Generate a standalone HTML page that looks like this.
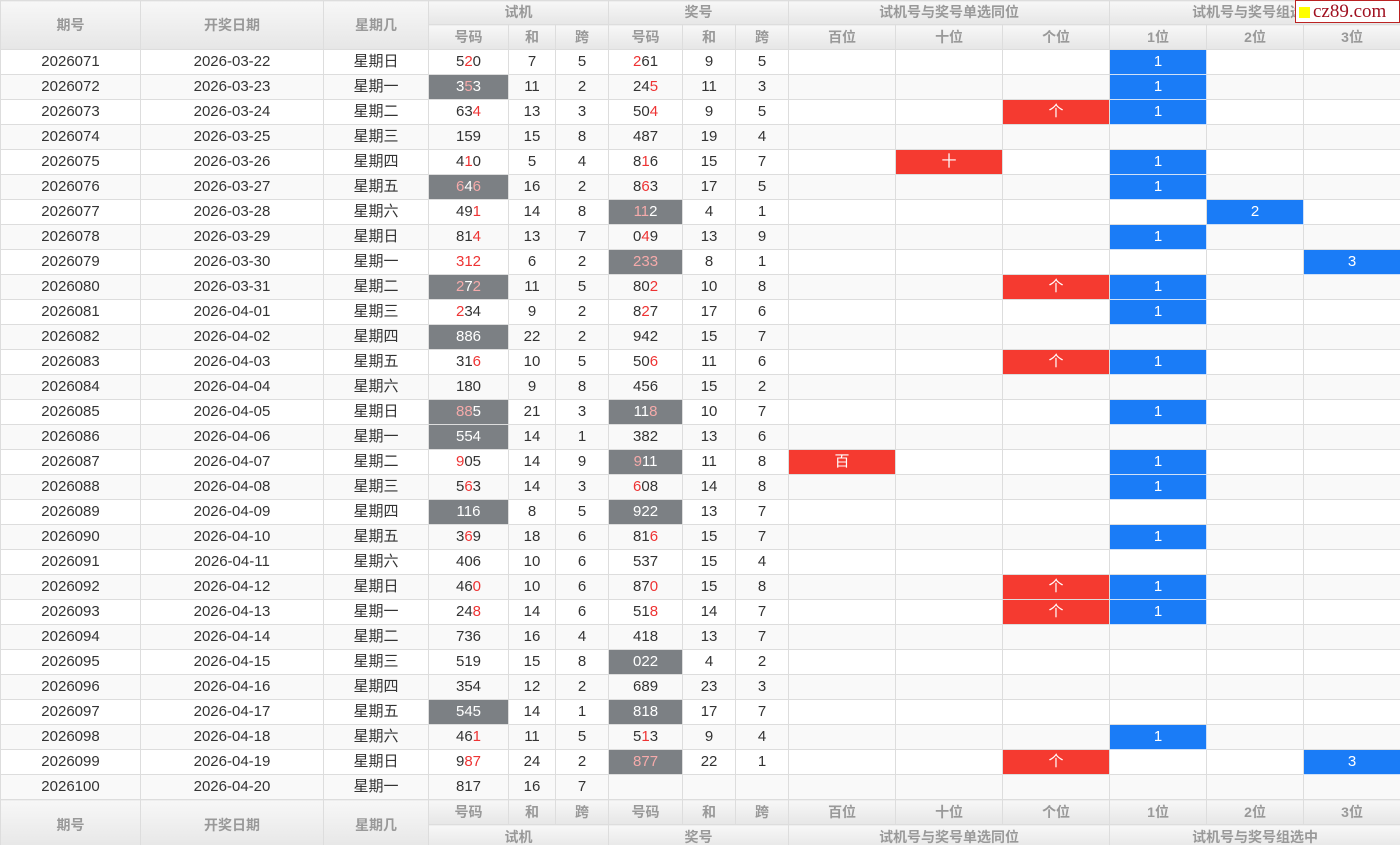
<!DOCTYPE html>
<html><head><meta charset="utf-8">
<style>
html,body{margin:0;padding:0;background:#fff;width:1400px;height:845px;overflow:hidden}
table{border-collapse:collapse;table-layout:fixed;width:1400px;font-family:"Liberation Sans","Noto Sans CJK SC",sans-serif;font-size:15px;color:#333}
td,th{height:24px;border:1px solid #ddd;text-align:center;padding:0;line-height:24px;white-space:nowrap;overflow:hidden}
thead tr:first-child th{height:23px;line-height:23px}
th{background:linear-gradient(#f7f7f7,#e6e6e6);color:#999;font-weight:bold;font-size:14px}
tr.e td{background:#f9f9f9}
td.g{background:#7c8084!important;color:#fff}
td.g i{color:#f5aaaa}
i{font-style:normal;color:#e33}
td.bl{border-left:1px solid #000}
td.B{background:#1a7cf7!important;color:#fff;border-color:#cfe0f7}
td.R{background:#f53a30!important;color:#fff}
.wm{position:absolute;left:1295px;top:0;width:103px;height:21px;background:#fff;border:1px solid #b22;font-family:"Liberation Serif",serif;font-size:19px;color:#a01020;line-height:21px}
.wm span{display:inline-block;width:11px;height:11px;background:#ff0;margin:0 3px 0 3px;vertical-align:-1px}
</style></head><body>
<div class="wm"><span></span>cz89.com</div>
<table id="t">
<colgroup><col style="width:140px"><col style="width:183px"><col style="width:105px"><col style="width:80px"><col style="width:47px"><col style="width:53px"><col style="width:74px"><col style="width:53px"><col style="width:53px"><col style="width:107px"><col style="width:107px"><col style="width:107px"><col style="width:97px"><col style="width:97px"><col style="width:97px"></colgroup>
<thead>
<tr><th rowspan="2">期号</th><th rowspan="2">开奖日期</th><th rowspan="2">星期几</th><th colspan="3">试机</th><th colspan="3">奖号</th><th colspan="3">试机号与奖号单选同位</th><th colspan="3">试机号与奖号组选中</th></tr>
<tr><th>号码</th><th>和</th><th>跨</th><th>号码</th><th>和</th><th>跨</th><th>百位</th><th>十位</th><th>个位</th><th>1位</th><th>2位</th><th>3位</th></tr>
</thead>
<tbody id="b"></tbody>
<tfoot>
<tr><th rowspan="2">期号</th><th rowspan="2">开奖日期</th><th rowspan="2">星期几</th><th>号码</th><th>和</th><th>跨</th><th>号码</th><th>和</th><th>跨</th><th>百位</th><th>十位</th><th>个位</th><th>1位</th><th>2位</th><th>3位</th></tr>
<tr><th colspan="3">试机</th><th colspan="3">奖号</th><th colspan="3">试机号与奖号单选同位</th><th colspan="3">试机号与奖号组选中</th></tr>
</tfoot>
</table>
<script>
var W=['日','一','二','三','四','五','六'];
var D=[
['03-22',0,'5<i>2</i>0',0,7,5,'<i>2</i>61',0,9,5,0,1],
['03-23',1,'3<i>5</i>3',1,11,2,'24<i>5</i>',0,11,3,0,1],
['03-24',2,'63<i>4</i>',0,13,3,'50<i>4</i>',0,9,5,3,1],
['03-25',3,'159',0,15,8,'487',0,19,4,0,0],
['03-26',4,'4<i>1</i>0',0,5,4,'8<i>1</i>6',0,15,7,2,1],
['03-27',5,'<i>6</i>4<i>6</i>',1,16,2,'8<i>6</i>3',0,17,5,0,1],
['03-28',6,'49<i>1</i>',0,14,8,'<i>11</i>2',1,4,1,0,2],
['03-29',0,'81<i>4</i>',0,13,7,'0<i>4</i>9',0,13,9,0,1],
['03-30',1,'<i>312</i>',0,6,2,'<i>233</i>',1,8,1,0,3],
['03-31',2,'<i>2</i>7<i>2</i>',1,11,5,'80<i>2</i>',0,10,8,3,1],
['04-01',3,'<i>2</i>34',0,9,2,'8<i>2</i>7',0,17,6,0,1],
['04-02',4,'886',1,22,2,'942',0,15,7,0,0],
['04-03',5,'31<i>6</i>',0,10,5,'50<i>6</i>',0,11,6,3,1],
['04-04',6,'180',0,9,8,'456',0,15,2,0,0],
['04-05',0,'<i>88</i>5',1,21,3,'11<i>8</i>',1,10,7,0,1],
['04-06',1,'554',1,14,1,'382',0,13,6,0,0],
['04-07',2,'<i>9</i>05',0,14,9,'<i>9</i>11',1,11,8,1,1],
['04-08',3,'5<i>6</i>3',0,14,3,'<i>6</i>08',0,14,8,0,1],
['04-09',4,'116',1,8,5,'922',1,13,7,0,0],
['04-10',5,'3<i>6</i>9',0,18,6,'81<i>6</i>',0,15,7,0,1],
['04-11',6,'406',0,10,6,'537',0,15,4,0,0],
['04-12',0,'46<i>0</i>',0,10,6,'87<i>0</i>',0,15,8,3,1],
['04-13',1,'24<i>8</i>',0,14,6,'51<i>8</i>',0,14,7,3,1],
['04-14',2,'736',0,16,4,'418',0,13,7,0,0],
['04-15',3,'519',0,15,8,'022',1,4,2,0,0],
['04-16',4,'354',0,12,2,'689',0,23,3,0,0],
['04-17',5,'545',1,14,1,'818',1,17,7,0,0],
['04-18',6,'46<i>1</i>',0,11,5,'5<i>1</i>3',0,9,4,0,1],
['04-19',0,'9<i>87</i>',0,24,2,'<i>877</i>',1,22,1,3,3],
['04-20',1,'817',0,16,7,'',0,'','',0,0]];
var h='';
D.forEach(function(r,i){
 h+='<tr'+(i%2?' class="e"':'')+'><td>'+(2026071+i)+'</td><td>2026-'+r[0]+'</td><td>星期'+W[r[1]]+'</td>';
 h+='<td'+(r[3]?' class="g"':'')+'>'+r[2]+'</td><td>'+r[4]+'</td><td>'+r[5]+'</td>';
 h+='<td class="bl'+(r[7]?' g':'')+'">'+r[6]+'</td><td>'+r[8]+'</td><td>'+r[9]+'</td>';
 var L=['百','十','个'];
 for(var k=1;k<=3;k++){h+='<td'+(k==1?' class="bl'+(r[10]==k?' R':'')+'"':(r[10]==k?' class="R"':''))+'>'+(r[10]==k?L[k-1]:'')+'</td>';}
 for(var k=1;k<=3;k++){var c=(k==1?'bl':'')+(r[11]==k?' B':'');h+='<td class="'+c+'">'+(r[11]==k?k:'')+'</td>';}
 h+='</tr>';
});
document.getElementById('b').innerHTML=h;
</script>
</body></html>
